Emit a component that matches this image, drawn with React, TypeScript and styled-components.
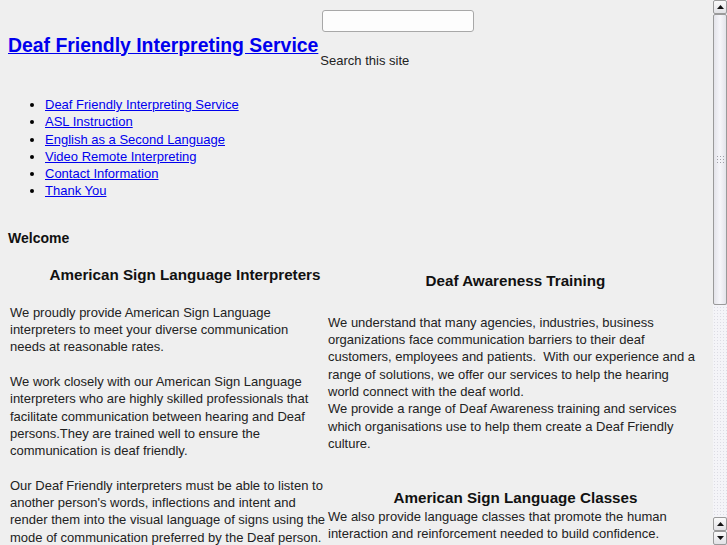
import styled, { createGlobalStyle } from 'styled-components';

const GlobalStyle = createGlobalStyle`
  html, body {
    margin: 0;
    padding: 0;
    overflow: hidden;
    background: #efefef;
  }
  body {
    font-family: "Liberation Sans", Arial, sans-serif;
    color: #222;
  }
`;

//#region layout
const Frame = styled.div`
  display: flex;
  width: 727px;
  height: 545px;
  overflow: hidden;
`;

const Page = styled.div`
  flex: 1;
  padding: 0 8px;
  overflow: hidden;
`;

const Header = styled.div`
  display: flex;
  align-items: center;
  height: 70px;
  padding-top: 4px;
`;

const SiteTitle = styled.a`
  font-size: 19.4px;
  font-weight: bold;
  color: #0000ee;
  text-decoration: underline;
  white-space: nowrap;
  margin-top: 12px;
`;

const SearchForm = styled.form`
  display: flex;
  flex-direction: column;
  align-items: flex-start;
  margin-left: 2px;
`;

const SearchInput = styled.input`
  width: 152px;
  height: 22px;
  box-sizing: border-box;
  margin: 0 0 0 2px;
  border: 1px solid #a8a8a8;
  border-radius: 3px;
  background: #fdfdfd;
`;

const SearchLabel = styled.span`
  font-size: 13px;
  color: #222;
  margin-top: 21px;
`;

const NavList = styled.ul`
  margin: 22px 0 0 0;
  padding-left: 37px;
  font-size: 13px;
  line-height: 17.3px;
  color: #000;
`;

const NavLink = styled.a`
  color: #0000ee;
  text-decoration: underline;
`;

const Welcome = styled.h2`
  font-size: 14px;
  font-weight: bold;
  color: #111;
  margin: 30px 0 0 0;
`;

const Columns = styled.div`
  display: grid;
  grid-template-columns: 320px 375px;
`;

const Column = styled.div<{ $top: number; $inset: number }>`
  padding-top: ${(p) => p.$top}px;
  padding-left: ${(p) => p.$inset}px;
  padding-right: ${(p) => p.$inset}px;
`;

const Heading = styled.h3<{ $indent?: number; $top?: number }>`
  font-size: 15.2px;
  font-weight: bold;
  color: #111;
  text-align: center;
  margin: ${(p) => p.$top ?? 0}px 0 0 0;
  padding-left: ${(p) => p.$indent ?? 0}px;
  line-height: 18px;
`;

const Para = styled.p<{ $top: number }>`
  font-size: 13px;
  line-height: 17.3px;
  margin: ${(p) => p.$top}px 0 0 0;
  color: #222;
`;
//#endregion

//#region scrollbar
const Scrollbar = styled.div`
  width: 14px;
  height: 545px;
  display: flex;
  flex-direction: column;
  background: #f4f4f8;
  background-image: radial-gradient(#dcdce4 0.6px, transparent 0.8px);
  background-size: 3px 3px;
`;

const ArrowButton = styled.div`
  width: 14px;
  height: 14px;
  box-sizing: border-box;
  border: 1px solid #9a9a9a;
  border-radius: 2px;
  background: linear-gradient(#fafafa, #e2e2e6);
  display: flex;
  align-items: center;
  justify-content: center;
`;

const Thumb = styled.div`
  height: 291px;
  box-sizing: border-box;
  border: 1px solid #9a9a9a;
  border-radius: 2px;
  background: linear-gradient(90deg, #e4e4ea, #f6f6fa 50%, #e4e4ea);
  display: flex;
  align-items: center;
  justify-content: center;
`;

const Grip = styled.div`
  width: 8px;
  height: 10px;
  background-image: radial-gradient(#a0a0a8 0.7px, transparent 0.9px);
  background-size: 3px 3px;
`;

const Track = styled.div`
  flex: 1;
`;
//#endregion

function Arrow({ up }: { up: boolean }) {
  return (
    <svg width="7" height="4" viewBox="0 0 7 4">
      <polygon points={up ? '0,4 7,4 3.5,0' : '0,0 7,0 3.5,4'} fill="#111" />
    </svg>
  );
}

const navItems = [
  'Deaf Friendly Interpreting Service',
  'ASL Instruction',
  'English as a Second Language',
  'Video Remote Interpreting',
  'Contact Information',
  'Thank You',
];

export default function App() {
  return (
    <>
      <GlobalStyle />
      <Frame>
        <Page>
          <Header>
            <SiteTitle href="#">Deaf Friendly Interpreting Service</SiteTitle>
            <SearchForm onSubmit={(e) => e.preventDefault()}>
              <SearchInput type="text" />
              <SearchLabel>Search this site</SearchLabel>
            </SearchForm>
          </Header>

          <NavList>
            {navItems.map((item) => (
              <li key={item}>
                <NavLink href="#">{item}</NavLink>
              </li>
            ))}
          </NavList>

          <Welcome>Welcome</Welcome>

          <Columns>
            <Column $top={20} $inset={2}>
              <Heading $indent={34}>American Sign Language Interpreters</Heading>
              <Para $top={20}>
                We proudly provide American Sign Language interpreters to meet your diverse
                communication needs at reasonable rates.
              </Para>
              <Para $top={17.3}>
                We work closely with our American Sign Language interpreters who are highly
                skilled professionals that facilitate communication between hearing and Deaf
                persons.They are trained well to ensure the communication is deaf friendly.
              </Para>
              <Para $top={17.3}>
                Our Deaf Friendly interpreters must be able to listen to another person's words,
                inflections and intent and render them into the visual language of signs using
                the mode of communication preferred by the Deaf person.
              </Para>
            </Column>
            <Column $top={26} $inset={0}>
              <Heading>Deaf Awareness Training</Heading>
              <Para $top={24}>
                We understand that many agencies, industries, business organizations face
                communication barriers to their deaf customers, employees and patients.&nbsp;
                With our experience and a range of solutions, we offer our services to help the
                hearing world connect with the deaf world.
                <br />
                We provide a range of Deaf Awareness training and services which organisations
                use to help them create a Deaf Friendly culture.
              </Para>
              <Heading $top={37}>American Sign Language Classes</Heading>
              <Para $top={1}>
                We also provide language classes that promote the human interaction and
                reinforcement needed to build confidence.
              </Para>
            </Column>
          </Columns>
        </Page>
        <Scrollbar>
          <ArrowButton>
            <Arrow up />
          </ArrowButton>
          <Thumb>
            <Grip />
          </Thumb>
          <Track />
          <ArrowButton>
            <Arrow up />
          </ArrowButton>
          <ArrowButton>
            <Arrow up={false} />
          </ArrowButton>
        </Scrollbar>
      </Frame>
    </>
  );
}
